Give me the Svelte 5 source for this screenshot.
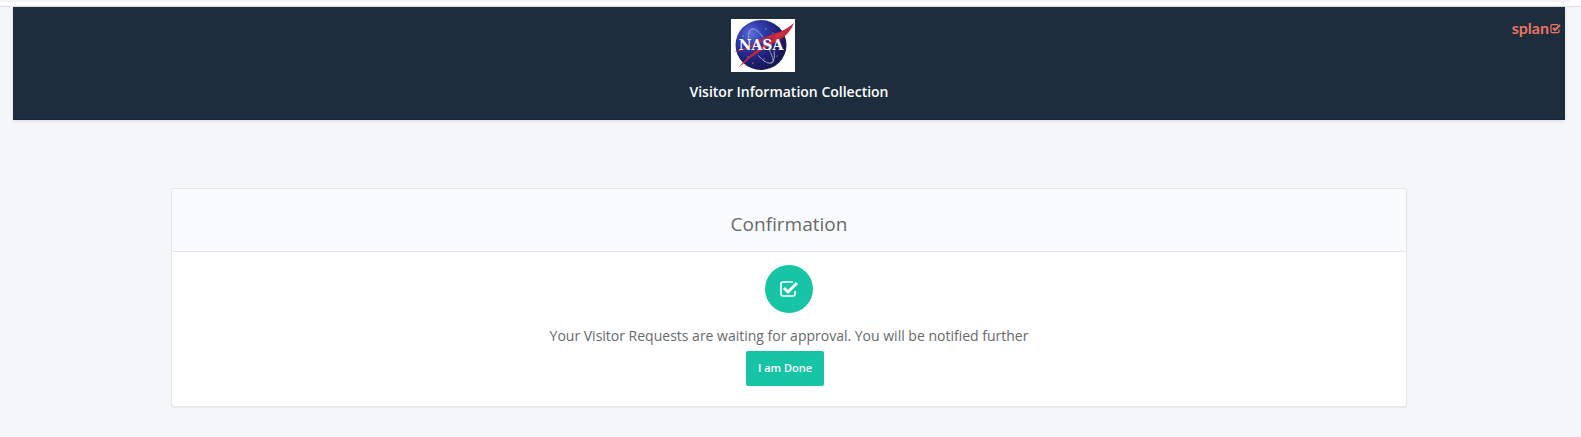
<script>
  let done = $state(false);

  function finish() {
    done = true;
  }
</script>

<div class="toolbar"><div class="address"></div></div>

<div class="page">
  <header class="banner">
    <a class="brand" href="#splan" aria-label="splan">
      <span>splan</span>
      <svg width="11" height="11" viewBox="0 0 22 22" fill="none" stroke="currentColor">
        <path d="M16 3H4Q2 3 2 5v12q0 2 2 2h12q2 0 2-2v-4" stroke-width="2.500" />
        <path d="M6 10l4 4L20 4" stroke-width="4" />
      </svg>
    </a>
    <svg class="logo" width="64" height="53" viewBox="0 0 64 53" role="img" aria-label="NASA">
      <defs>
        <radialGradient id="globe" cx="0.3" cy="0.27" r="0.75">
          <stop offset="0" stop-color="#6470d8" />
          <stop offset="0.3" stop-color="#3040b0" />
          <stop offset="0.7" stop-color="#202079" />
          <stop offset="1" stop-color="#171752" />
        </radialGradient>
      </defs>
      <rect width="64" height="53" fill="#fff" />
      <ellipse cx="30" cy="26" rx="25.500" ry="25" fill="url(#globe)" />
      <g fill="none" stroke="#aeb8dc" stroke-width="0.9">
        <path d="M18 22C17 14 18 10 22 10c5 0 12 10 16 20 4 9 6 14 2 14-4 1-9-3-13-8" stroke-dasharray="5 0.6" />
        <path d="M43 32c1 6 0 11-3 12" />
      </g>
      <g fill="#d8def4">
        <circle cx="12" cy="17" r="0.6" />
        <circle cx="35" cy="10" r="0.6" />
        <circle cx="42" cy="14" r="0.5" />
        <circle cx="17" cy="38" r="0.6" />
        <circle cx="22" cy="44" r="0.6" />
        <circle cx="46" cy="37" r="0.5" />
        <circle cx="33" cy="40" r="0.5" />
      </g>
      <path d="M2 33Q14 30 24 24T42 15Q54 12 63 4Q59 15 47 22Q25 33 7 49Q19 34 42 20Q36 19 28 24Q15 32 2 33Z" fill="#c5273a" />
      <path d="M44 16Q54 13 62 5Q57 14 45 20Z" fill="#c93040" />
      <text class="logo-text" x="30" y="31" text-anchor="middle">NASA</text>
    </svg>
    <h1>Visitor Information Collection</h1>
  </header>

  <main class="card">
    <h2>Confirmation</h2>
    <div class="card-body">
      <div class="status">
        <svg width="20" height="18" viewBox="0 0 20 18" fill="none" stroke="#fff">
          <path d="M14 2H4Q2 2 2 4v10q0 2 2 2h10q2 0 2-2v-3" stroke-width="1.600" />
          <path d="M5 8l4 4L18 3" stroke-width="3" />
        </svg>
      </div>
      <p>Your Visitor Requests are waiting for approval. You will be notified further</p>
      <button type="button" onclick={finish} disabled={done}>I am Done</button>
    </div>
  </main>
</div>

<style>
  :global(body) {
    background: #f4f6f8;
    font-family: "Open Sans", "Noto Sans", sans-serif;
    color: #676a6c;
  }
  .toolbar {
    height: 6px;
    background: #fff;
    border-bottom: 1px solid #dcdee0;
  }
  .address {
    height: 2px;
    margin-right: 10px;
    background: #f1f3f4;
    border-bottom-right-radius: 2px;
  }
  .page {
    padding: 0 16px 24px 13px;
  }
  .banner {
    position: relative;
    display: flex;
    flex-direction: column;
    align-items: center;
    padding: 12px 0 17px;
    background: #1e2d3d;
    border-bottom: 1px solid #1b2140;
    box-shadow: 0 1px 4px rgba(0, 0, 0, 0.1);
  }
  .logo {
    margin-right: 52px;
  }
  .logo-text {
    font: bold 14px "DejaVu Serif", serif;
    fill: #fff;
  }
  .brand {
    position: absolute;
    top: 11px;
    right: 4px;
    display: flex;
    align-items: center;
    gap: 1px;
    color: #e97462;
    font: bold 16px/20px Lato, sans-serif;
    text-decoration: none;
  }
  h1 {
    margin: 10px 0 0;
    color: #fff;
    font-size: 14px;
    font-weight: 600;
    line-height: 20px;
  }
  .card {
    margin: 68px 158px 0;
    background: #fff;
    border: 1px solid #e3e6ea;
    border-radius: 3px;
    box-shadow: 0 1px 1px rgba(0, 0, 0, 0.06);
    text-align: center;
  }
  h2 {
    margin: 0;
    padding: 21px 0 13px;
    background: #fafbfd;
    border-bottom: 1px solid #e3e6ea;
    border-radius: 3px 3px 0 0;
    font-size: 19px;
    font-weight: 400;
    line-height: 28px;
  }
  .card-body {
    padding: 13px 16px 20px;
  }
  .status {
    display: flex;
    align-items: center;
    justify-content: center;
    width: 48px;
    height: 48px;
    margin: 0 auto;
    background: #17c4a5;
    border-radius: 50%;
  }
  p {
    margin: 13px 0 5px;
    font-size: 14px;
    line-height: 20px;
  }
  button {
    display: block;
    margin: 0 auto;
    padding: 8px 12px 10px;
    position: relative;
    right: 4px;
    background: #17c4a5;
    border: 0;
    border-radius: 2px;
    color: #fff;
    font: 600 11px/17px "Open Sans", sans-serif;
    cursor: pointer;
  }
</style>
